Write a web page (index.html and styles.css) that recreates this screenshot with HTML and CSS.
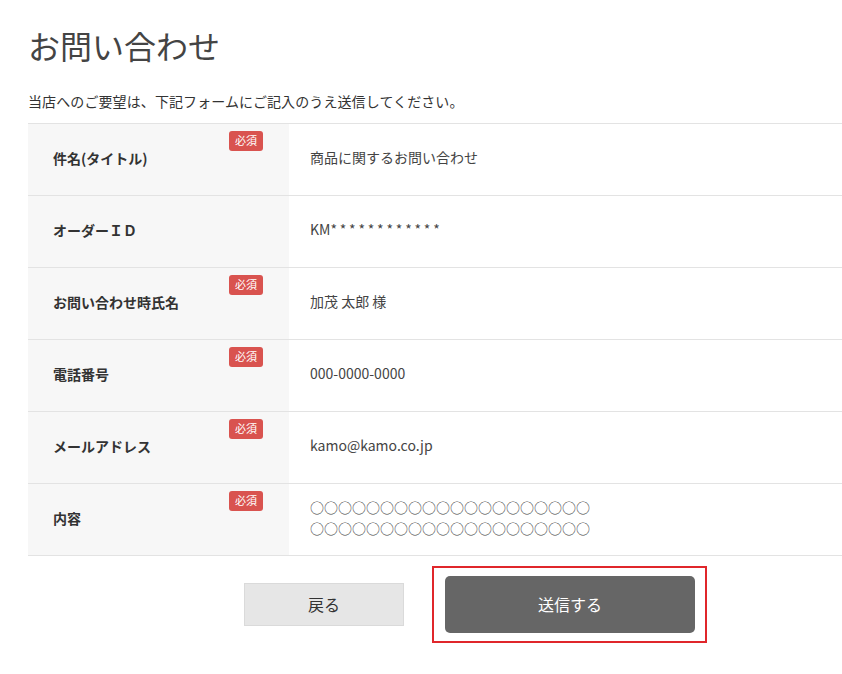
FILE: index.html
```html
<!DOCTYPE html>
<html lang="ja">
<head>
<meta charset="utf-8">
<title>お問い合わせ</title>
<link rel="stylesheet" href="styles.css">
</head>
<body>
<div class="page">
  <h1 class="title">お問い合わせ</h1>
  <p class="lead">当店へのご要望は、下記フォームにご記入のうえ送信してください。</p>
  <table class="form">
    <tr>
      <th><span class="label">件名(タイトル)</span><span class="req">必須</span></th>
      <td>商品に関するお問い合わせ</td>
    </tr>
    <tr>
      <th><span class="label">オーダーＩＤ</span></th>
      <td>KM<span class="mask">************</span></td>
    </tr>
    <tr>
      <th><span class="label">お問い合わせ時氏名</span><span class="req">必須</span></th>
      <td>加茂 太郎 様</td>
    </tr>
    <tr>
      <th><span class="label">電話番号</span><span class="req">必須</span></th>
      <td>000-0000-0000</td>
    </tr>
    <tr>
      <th><span class="label">メールアドレス</span><span class="req">必須</span></th>
      <td>kamo@kamo.co.jp</td>
    </tr>
    <tr>
      <th><span class="label">内容</span><span class="req">必須</span></th>
      <td>○○○○○○○○○○○○○○○○○○○○<br>○○○○○○○○○○○○○○○○○○○○</td>
    </tr>
  </table>
  <div class="actions">
    <button class="btn-back" type="button">戻る</button>
    <div class="highlight">
      <button class="btn-send" type="button">送信する</button>
    </div>
  </div>
</div>
</body>
</html>
```

FILE: styles.css
```css
html, body {
  margin: 0;
  padding: 0;
  background: #ffffff;
}
body {
  font-family: "Noto Sans CJK JP", "Noto Sans", sans-serif;
  color: #444;
}
.page {
  padding-left: 28px;
}
.title {
  margin: 0;
  padding-top: 23px;
  font-size: 32px;
  line-height: 45px;
  font-weight: normal;
  color: #444;
}
.lead {
  margin: 23px 0 0;
  font-size: 14px;
  line-height: 20px;
  color: #333;
  letter-spacing: 0.1px;
}
.form {
  margin-top: 12px;
  width: 814px;
  border-collapse: collapse;
  border-top: 1px solid #e3e3e3;
}
.form tr {
  border-bottom: 1px solid #e3e3e3;
}
.form th {
  position: relative;
  width: 261px;
  height: 72px;
  padding: 0 0 4px 25px;
  box-sizing: border-box;
  background: #f7f7f7;
  text-align: left;
  vertical-align: middle;
  font-size: 14px;
  font-weight: bold;
  color: #333;
}
.form td {
  height: 72px;
  padding: 0 0 4px 21px;
  box-sizing: border-box;
  vertical-align: middle;
  font-size: 14px;
  line-height: 21px;
  color: #444;
}
.mask {
  letter-spacing: 2.8px;
}
.req {
  position: absolute;
  top: 7px;
  right: 26px;
  width: 34px;
  height: 20px;
  border-radius: 3px;
  background: #d9534f;
  color: #fff;
  font-size: 11px;
  font-weight: normal;
  line-height: 19px;
  text-align: center;
}
.actions {
  display: flex;
  align-items: center;
  margin-top: 10px;
  padding-left: 216px;
  gap: 28px;
}
.btn-back {
  width: 160px;
  height: 43px;
  padding-bottom: 3px;
  background: #e6e6e6;
  border: 1px solid #dadada;
  font-family: inherit;
  font-size: 16px;
  color: #333;
  cursor: pointer;
}
.highlight {
  border: 2px solid #e0262b;
  padding: 8px 10px 8px 11px;
}
.btn-send {
  display: block;
  width: 250px;
  height: 57px;
  padding-bottom: 3px;
  border: none;
  border-radius: 5px;
  background: #666666;
  color: #fff;
  font-family: inherit;
  font-size: 16px;
  cursor: pointer;
}
```
